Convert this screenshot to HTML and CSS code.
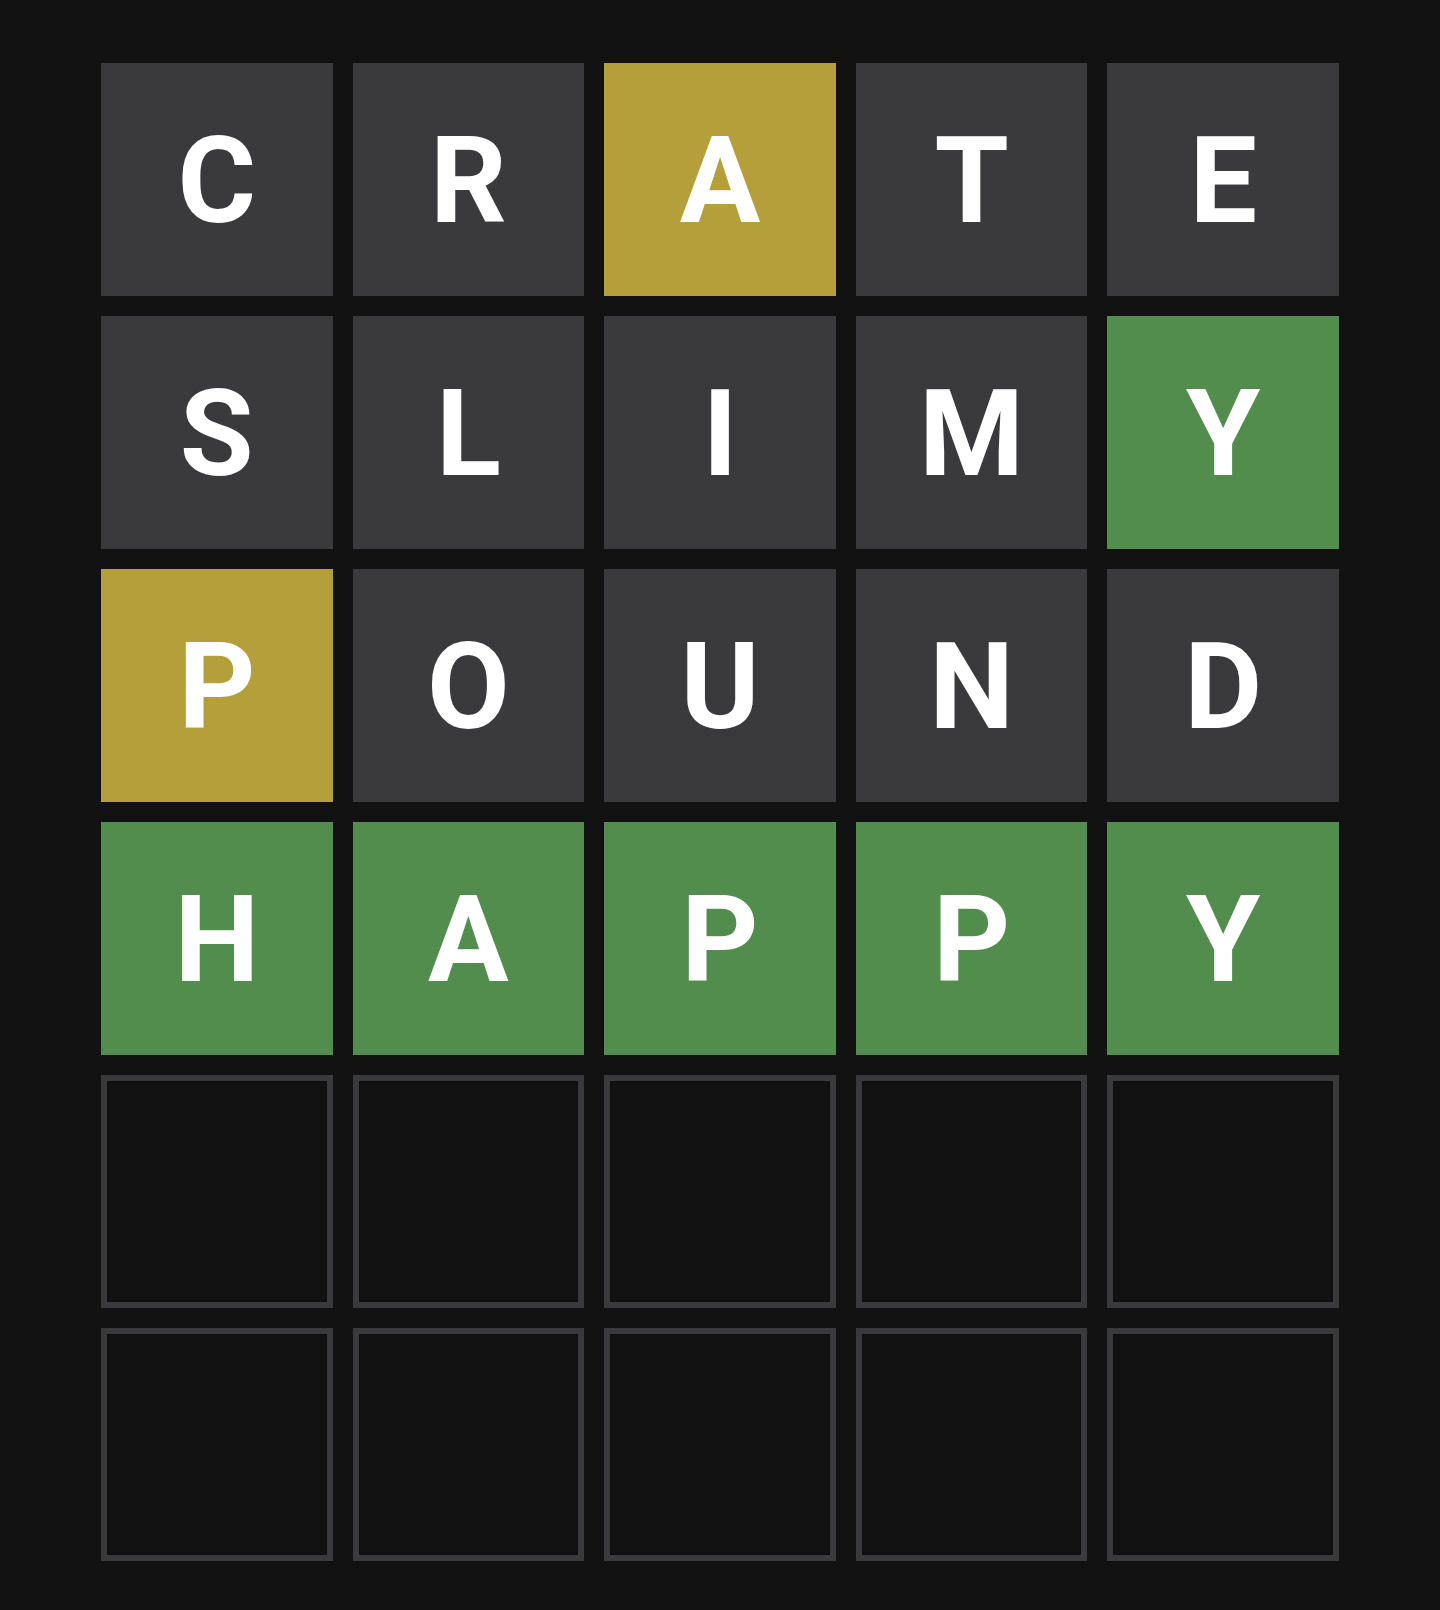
FILE: index.html
```html
<!DOCTYPE html>
<html lang="en">
<head>
<meta charset="utf-8">
<title>Wordle board</title>
<link rel="stylesheet" href="styles.css">
</head>
<body>
<main class="board">
  <div class="row">
    <div class="tile absent">C</div>
    <div class="tile absent">R</div>
    <div class="tile present">A</div>
    <div class="tile absent">T</div>
    <div class="tile absent">E</div>
  </div>
  <div class="row">
    <div class="tile absent">S</div>
    <div class="tile absent">L</div>
    <div class="tile absent">I</div>
    <div class="tile absent">M</div>
    <div class="tile correct">Y</div>
  </div>
  <div class="row">
    <div class="tile present">P</div>
    <div class="tile absent">O</div>
    <div class="tile absent">U</div>
    <div class="tile absent">N</div>
    <div class="tile absent">D</div>
  </div>
  <div class="row">
    <div class="tile correct">H</div>
    <div class="tile correct">A</div>
    <div class="tile correct">P</div>
    <div class="tile correct">P</div>
    <div class="tile correct">Y</div>
  </div>
  <div class="row">
    <div class="tile empty"></div>
    <div class="tile empty"></div>
    <div class="tile empty"></div>
    <div class="tile empty"></div>
    <div class="tile empty"></div>
  </div>
  <div class="row">
    <div class="tile empty"></div>
    <div class="tile empty"></div>
    <div class="tile empty"></div>
    <div class="tile empty"></div>
    <div class="tile empty"></div>
  </div>
</main>
</body>
</html>
```

FILE: styles.css
```css
html, body {
  margin: 0;
  padding: 0;
  background: #121213;
}

body {
  width: 1440px;
  height: 1610px;
  font-family: Roboto, "Liberation Sans", Arial, sans-serif;
  overflow: hidden;
}

.board {
  display: flex;
  flex-direction: column;
  gap: 20px;
  width: 1238px;
  padding: 63px 0 0 101px;
}

.row {
  display: grid;
  grid-template-columns: repeat(5, 1fr);
  gap: 20px;
}

.tile {
  box-sizing: border-box;
  height: 233px;
  display: flex;
  align-items: center;
  justify-content: center;
  color: #ffffff;
  font-weight: 700;
  font-size: 120px;
  line-height: 1;
  padding-top: 2px;
}

.absent {
  background: #3a3a3c;
}

.present {
  background: #b59f3b;
}

.correct {
  background: #538d4e;
}

.empty {
  background: #121213;
  border: 6px solid #3a3a3c;
  box-shadow: inset 0 0 0 1px #0e0e0f;
}
```
